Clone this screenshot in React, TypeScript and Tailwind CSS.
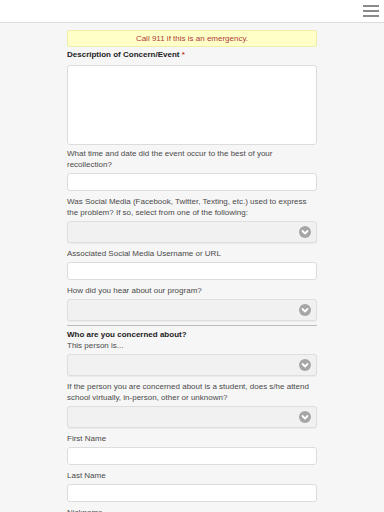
import React from 'react';

function Chevron() {
  return (
    <svg className="w-[12px] h-[12px]" viewBox="0 0 12 12">
      <circle cx="6" cy="6" r="6" fill="#a6a6a6" />
      <path d="M3.5 5 L6 7.5 L8.5 5" fill="none" stroke="#fff" strokeWidth="1.8" strokeLinecap="round" strokeLinejoin="round" />
    </svg>
  );
}

function Label({ children }: { children: React.ReactNode }) {
  return <div className="text-[8px] leading-[11px] text-[#4a4a4a] mb-[3px]">{children}</div>;
}

function TextInput() {
  return <div className="h-[18px] bg-white border border-[#dcdcdc] rounded-[3px] mb-[5px]" />;
}

function Select() {
  return (
    <div className="h-[22px] bg-[#f1f1f1] border border-[#dedede] rounded-[3px] flex items-center justify-end pr-[5px] mb-[5px] shadow-[0_1px_1px_rgba(0,0,0,0.05)]">
      <Chevron />
    </div>
  );
}

export default function App() {
  return (
    <div className="w-[384px] h-[512px] overflow-hidden bg-[#f6f6f6]" style={{ fontFamily: '"Liberation Sans", Arial, sans-serif' }}>
      {/* Header */}
      <div className="h-[23px] bg-white border-b border-[#dddddd] flex items-center justify-end pr-[5px]">
        <div className="flex flex-col gap-[3px] w-[16px]">
          <div className="h-[2px] bg-[#8a8a8a]" />
          <div className="h-[2px] bg-[#8a8a8a]" />
          <div className="h-[2px] bg-[#8a8a8a]" />
        </div>
      </div>

      <div className="w-[250px] mx-auto pt-[7px]">
        <div className="h-[17px] bg-[#ffffc8] border border-[#eeeeaa] rounded-[2px] flex items-center justify-center text-[8px] text-[#b03a3a] mb-[2px]">
          Call 911 if this is an emergency.
        </div>

        <div className="text-[8px] leading-[11px] font-bold text-[#222] mb-[5px]">
          Description of Concern/Event <span className="text-[#c0392b]">*</span>
        </div>
        <div className="h-[80px] bg-white border border-[#dcdcdc] rounded-[3px] mb-[3px]" />

        <Label>What time and date did the event occur to the best of your recollection?</Label>
        <TextInput />

        <Label>Was Social Media (Facebook, Twitter, Texting, etc.) used to express the problem? If so, select from one of the following:</Label>
        <Select />

        <Label>Associated Social Media Username or URL</Label>
        <TextInput />

        <Label>How did you hear about our program?</Label>
        <Select />

        <div className="border-t border-[#bdbdbd] mt-[-1px] mb-[3px]" />

        <div className="text-[8px] leading-[11px] font-bold text-[#222]">Who are you concerned about?</div>
        <Label>This person is...</Label>
        <Select />

        <Label>If the person you are concerned about is a student, does s/he attend school virtually, in-person, other or unknown?</Label>
        <Select />

        <Label>First Name</Label>
        <TextInput />

        <Label>Last Name</Label>
        <TextInput />

        <Label>Nickname</Label>
        <TextInput />
      </div>
    </div>
  );
}
